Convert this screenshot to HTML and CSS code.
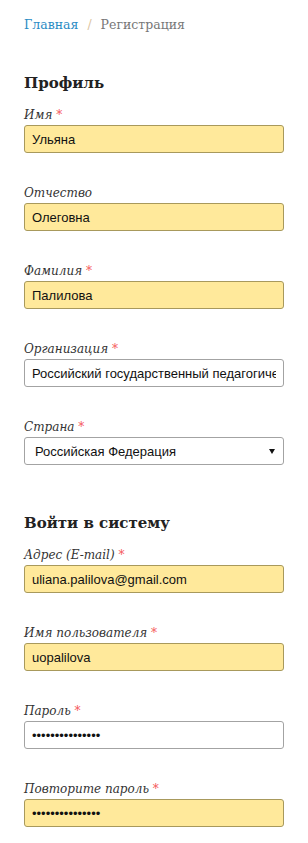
FILE: index.html
```html
<!DOCTYPE html>
<html lang="ru">
<head>
    <meta charset="UTF-8">
    <meta name="viewport" content="width=device-width, initial-scale=1.0">
    <title>Регистрация</title>
    <link rel="stylesheet" href="styles.css">
</head>
<body>
    <div class="breadcrumb">
        <a href="#">Главная</a>
        <span class="divider">/</span>
        <span class="current">Регистрация</span>
    </div>

    <form class="register-form">
        <h2 class="section-title">Профиль</h2>

        <div class="form-group">
            <label for="first">Имя <span class="req">*</span></label>
            <input type="text" id="first" class="filled" value="Ульяна">
        </div>
        <div class="form-group">
            <label for="middle">Отчество</label>
            <input type="text" id="middle" class="filled" value="Олеговна">
        </div>
        <div class="form-group">
            <label for="last">Фамилия <span class="req">*</span></label>
            <input type="text" id="last" class="filled" value="Палилова">
        </div>
        <div class="form-group">
            <label for="org">Организация <span class="req">*</span></label>
            <input type="text" id="org" value="Российский государственный педагогический университет им. А. И. Герцена">
        </div>
        <div class="form-group">
            <label for="country">Страна <span class="req">*</span></label>
            <div class="select-wrap">
                <select id="country">
                    <option>Российская Федерация</option>
                </select>
            </div>
        </div>

        <h2 class="section-title second">Войти в систему</h2>

        <div class="form-group">
            <label for="email">Адрес (E-mail) <span class="req">*</span></label>
            <input type="text" id="email" class="filled" value="uliana.palilova@gmail.com">
        </div>
        <div class="form-group">
            <label for="user">Имя пользователя <span class="req">*</span></label>
            <input type="text" id="user" class="filled" value="uopalilova">
        </div>
        <div class="form-group">
            <label for="pass">Пароль <span class="req">*</span></label>
            <input type="password" id="pass" value="aaaaaaaaaaaaaaa">
        </div>
        <div class="form-group">
            <label for="pass2">Повторите пароль <span class="req">*</span></label>
            <input type="password" id="pass2" class="filled" value="aaaaaaaaaaaaaaa">
        </div>
    </form>
</body>
</html>
```

FILE: styles.css
```css
body {
    margin: 0;
    padding: 0 24px;
    background-color: #fff;
    color: #333;
    font-family: "DejaVu Serif", serif;
}
.breadcrumb {
    padding-top: 15px;
    font-size: 12.5px;
    line-height: 20px;
    color: #777;
}
.breadcrumb a {
    color: #2a8bc4;
    text-decoration: none;
}
.breadcrumb .divider {
    color: #dcc4a0;
    padding: 0 5px;
}
.register-form {
    width: 260px;
    margin-top: 36px;
}
.section-title {
    margin: 0 0 10px;
    font-size: 15px;
    line-height: 24px;
    font-weight: bold;
    color: #222;
}
.section-title.second {
    margin-top: 46px;
}
.form-group {
    margin-bottom: 30px;
}
.form-group label {
    display: block;
    font-size: 12px;
    line-height: 20px;
    font-style: italic;
    color: #333;
}
.req {
    color: #f5555a;
    font-style: normal;
}
input, select {
    display: block;
    box-sizing: border-box;
    width: 260px;
    height: 28px;
    margin: 0;
    padding: 0 7px;
    border: 1px solid #a3a3a3;
    border-radius: 3px;
    background-color: #fff;
    font-family: "Liberation Sans", Arial, sans-serif;
    font-size: 13px;
    color: #111;
}
input.filled {
    background-color: #ffe99b;
    border-color: #a8995c;
}
.select-wrap {
    position: relative;
}
.select-wrap select {
    appearance: none;
    -webkit-appearance: none;
    padding-left: 10px;
}
.select-wrap::after {
    content: "";
    position: absolute;
    right: 9px;
    top: 12px;
    border-left: 3px solid transparent;
    border-right: 3px solid transparent;
    border-top: 5px solid #111;
    pointer-events: none;
}
```
